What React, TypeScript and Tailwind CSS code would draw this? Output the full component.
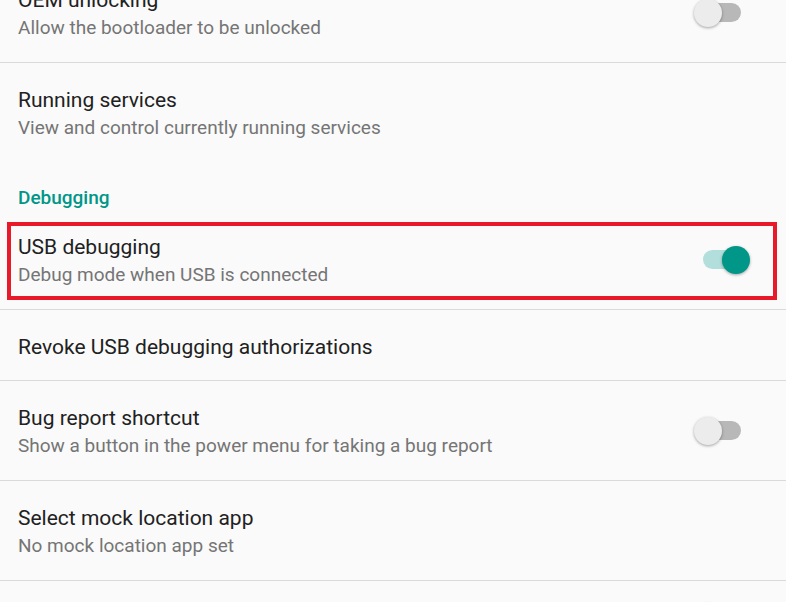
import React from 'react';

type Row = {
  title: string;
  summary?: string;
  toggle?: boolean;
  checked?: boolean;
  divider?: boolean;
  highlight?: boolean;
};

const rowsTop: Row[] = [
  { title: 'OEM unlocking', summary: 'Allow the bootloader to be unlocked', toggle: true, checked: false, divider: true },
  { title: 'Running services', summary: 'View and control currently running services', divider: false },
];

const rowsDebug: Row[] = [
  { title: 'USB debugging', summary: 'Debug mode when USB is connected', toggle: true, checked: true, divider: true, highlight: true },
  { title: 'Revoke USB debugging authorizations', divider: true },
  { title: 'Bug report shortcut', summary: 'Show a button in the power menu for taking a bug report', toggle: true, checked: false, divider: true },
  { title: 'Select mock location app', summary: 'No mock location app set', divider: true },
  { title: 'Verify apps over USB', toggle: true, checked: false, divider: false },
];

function Switch({ checked }: { checked?: boolean }) {
  return (
    <div className="relative w-[56px] h-[28px] shrink-0">
      <div
        className={
          checked
            ? 'absolute left-[9px] right-[9px] top-[4px] h-[19px] rounded-full bg-[#b2dfdb]'
            : 'absolute left-[9px] right-[9px] top-[4px] h-[19px] rounded-full bg-[#b8b8b8]'
        }
      />
      <div
        className={
          checked
            ? 'absolute right-0 top-0 w-[28px] h-[28px] rounded-full bg-[#009688] shadow-[0_1px_3px_rgba(0,0,0,0.35)]'
            : 'absolute left-0 top-0 w-[28px] h-[28px] rounded-full bg-[#ececec] shadow-[0_1px_3px_rgba(0,0,0,0.35)]'
        }
      />
    </div>
  );
}

function PrefRow({ row }: { row: Row }) {
  const two = !!row.summary;
  return (
    <div
      className={
        (row.divider ? 'border-b border-[#dadada] ' : '') +
        'relative flex items-center pl-[18px] pr-[36px] ' +
        (two ? 'h-[100px]' : 'h-[71px]')
      }
    >
      <div className={two ? 'flex-1 flex flex-col pt-[1px]' : 'flex-1 flex flex-col pt-[4px]'}>
        <div className="text-[21px] leading-[28px] text-[#212121]">{row.title}</div>
        {row.summary ? (
          <div className="text-[19px] leading-[27px] text-[#757575]">{row.summary}</div>
        ) : null}
      </div>
      {row.toggle ? <Switch checked={row.checked} /> : null}
      {row.highlight ? (
        <div className="absolute left-[7px] right-[9px] top-[12px] bottom-[9px] border-4 border-[#e81a2a] pointer-events-none" />
      ) : null}
    </div>
  );
}

export default function App() {
  return (
    <div
      className="w-[786px] h-[602px] overflow-hidden bg-[#fafafa]"
      style={{ fontFamily: 'Roboto, "Noto Sans", sans-serif' }}
    >
      <div className="-mt-[37px]">
        {rowsTop.map((row, i) => (
          <PrefRow key={i} row={row} />
        ))}
        <div className="h-[47px] pl-[18px] pt-[23px]">
          <div className="text-[19px] leading-[24px] font-medium text-[#009688]">Debugging</div>
        </div>
        {rowsDebug.map((row, i) => (
          <PrefRow key={i} row={row} />
        ))}
      </div>
    </div>
  );
}
